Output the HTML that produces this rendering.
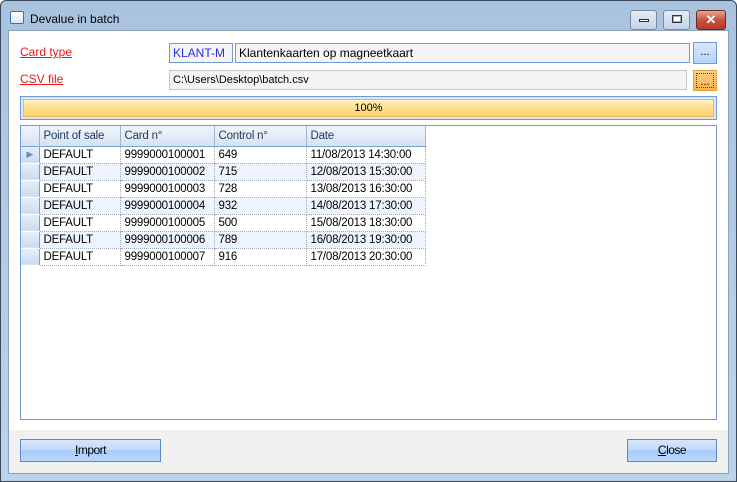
<!DOCTYPE html><html><head><style>
*{margin:0;padding:0;box-sizing:border-box}
body{width:737px;height:482px;overflow:hidden;font-family:"Liberation Sans",sans-serif;font-size:12px;background:#fff}
.win{position:absolute;left:0;top:0;width:737px;height:482px;background:linear-gradient(#a9c3df,#bcd3ec);border:1px solid #3a4a5e;border-radius:6px 6px 0 0}
.abs{position:absolute}
.title{left:29px;top:11px;font-size:12px;color:#000}
.client{left:7px;top:29px;width:721px;height:444px;background:#fff;border:1px solid #8ba2bd}
.foot{left:0;top:399px;width:719px;height:43px;background:#f0f0f0}
.lbl{color:#e81818;text-decoration:underline;font-size:12px}
.box{border:1px solid #6f9ad6;background:#f4f4f4;height:20px;line-height:18px;padding-left:3px;font-size:12px}
.tb{width:27px;height:20px;border:1px solid #7a8b9e;border-radius:3px;background:linear-gradient(#e3ebf5,#c3d3e6)}
.grid{border-collapse:collapse;font-size:11.5px;letter-spacing:-0.2px}
.grid td{height:17px;padding-left:4px;border-right:1px dotted #9ab;border-bottom:1px dotted #9ab;white-space:nowrap}
.grid th{height:20px;font-weight:normal;text-align:left;padding-left:4px;color:#1e395b;background:linear-gradient(#f2f6fb,#d5e2f2);border-right:1px solid #9db6d6;border-bottom:1px solid #7aa0d4}
.grid td.rh{width:17px;padding:0;background:linear-gradient(#e6eef9,#cbdbf0);border-right:1px solid #7aa0d4;border-bottom:1px solid #fff}
.alt td{background:#eef4fd}
.btn{border:1px solid #5d89c6;background:linear-gradient(#d5e6fb 0,#c2dbfb 45%,#a9ccf9 50%,#b8d6fb 100%);text-align:center;line-height:20px;font-size:12px;letter-spacing:-0.5px}
</style></head><body>
<div class="win">
<div class="abs" style="left:9px;top:10px;width:14px;height:13px;border:1px solid #3b6fb5;background:linear-gradient(#fff,#dce8f6);border-radius:2px"></div>
<div class="abs title">Devalue in batch</div>
<div class="abs tb" style="left:629px;top:9px"><div class="abs" style="left:8px;top:8px;width:10px;height:3px;border:1px solid #334;background:#fff"></div></div>
<div class="abs tb" style="left:662px;top:9px"><div class="abs" style="left:8px;top:4px;width:10px;height:8px;border:1px solid #334;background:#fff;box-shadow:inset 0 0 0 1px #aaa"></div></div>
<div class="abs" style="left:695px;top:9px;width:30px;height:20px;border:1px solid #6b2a22;border-radius:3px;background:linear-gradient(#e8a598,#c8533f 50%,#b53b28);color:#fff;font-weight:bold;text-align:center;line-height:18px;font-size:13px">✕</div>
<div class="abs client">
<div class="abs lbl" style="left:11px;top:14px">Card type</div>
<div class="abs lbl" style="left:11px;top:41px">CSV file</div>
<div class="abs box" style="left:160px;top:12px;width:64px;color:#2b2bea">KLANT-M</div>
<div class="abs box" style="left:226px;top:12px;width:455px">Klantenkaarten op magneetkaart</div>
<div class="abs" style="left:684px;top:11px;width:24px;height:22px;border:1px solid #6f9ad6;background:linear-gradient(#d8e8fc,#b5d3fb);text-align:center;font-size:11px;line-height:18px">...</div>
<div class="abs box" style="left:160px;top:39px;width:518px;border-color:#c8c8c8;font-size:11px">C:\Users\Desktop\batch.csv</div>
<div class="abs" style="left:684px;top:39px;width:24px;height:21px;border:1px solid #e6a13a;background:linear-gradient(#fdd08a,#fbb24c);text-align:center;font-size:11px;line-height:16px"><div style="margin:2px;border:1px dotted #444;height:15px">...</div></div>
<div class="abs" style="left:11px;top:65px;width:697px;height:24px;border:1px solid #6f9ad6;background:#dbe7f6">
<div class="abs" style="left:2px;top:2px;width:691px;height:18px;border:1px solid #f2b357;background:linear-gradient(#fff2c4,#fedf8b 50%,#fdd576);text-align:center;font-size:11px;line-height:16px">100%</div></div>
<div class="abs" style="left:11px;top:94px;width:697px;height:295px;border:1px solid #6f9ad6;background:#fff">
<table class="grid"><tr><th style="width:18px;padding:0"></th><th style="width:81px">Point of sale</th><th style="width:94px">Card n°</th><th style="width:92px">Control n°</th><th style="width:119px">Date</th></tr>
<tr><td class="rh" style="color:#6a8fc0;font-size:9px;text-align:center">▶</td><td>DEFAULT</td><td>9999000100001</td><td>649</td><td>11/08/2013 14:30:00</td></tr>
<tr class="alt"><td class="rh"></td><td>DEFAULT</td><td>9999000100002</td><td>715</td><td>12/08/2013 15:30:00</td></tr>
<tr><td class="rh"></td><td>DEFAULT</td><td>9999000100003</td><td>728</td><td>13/08/2013 16:30:00</td></tr>
<tr class="alt"><td class="rh"></td><td>DEFAULT</td><td>9999000100004</td><td>932</td><td>14/08/2013 17:30:00</td></tr>
<tr><td class="rh"></td><td>DEFAULT</td><td>9999000100005</td><td>500</td><td>15/08/2013 18:30:00</td></tr>
<tr class="alt"><td class="rh"></td><td>DEFAULT</td><td>9999000100006</td><td>789</td><td>16/08/2013 19:30:00</td></tr>
<tr><td class="rh"></td><td>DEFAULT</td><td>9999000100007</td><td>916</td><td>17/08/2013 20:30:00</td></tr>
</table></div>
<div class="abs foot">
<div class="abs btn" style="left:11px;top:9px;width:141px;height:23px"><u>I</u>mport</div>
<div class="abs btn" style="left:618px;top:9px;width:90px;height:23px"><u>C</u>lose</div>
</div></div></div>
</body></html>
